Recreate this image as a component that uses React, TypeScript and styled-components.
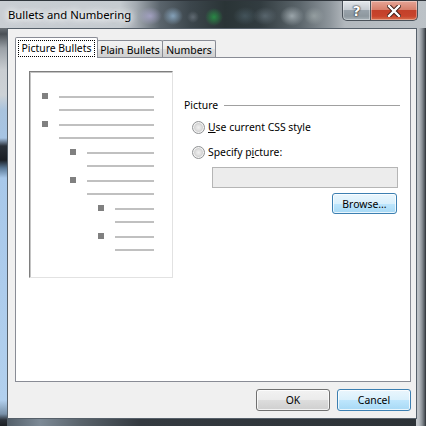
import React from 'react';
import styled, { createGlobalStyle } from 'styled-components';

const UI_FONT = `"Noto Sans", "Liberation Sans", sans-serif`;

const GlobalStyle = createGlobalStyle`
  html, body { margin: 0; padding: 0; background: #2a3036; }
  #root { width: 426px; height: 426px; overflow: hidden; }
  * { box-sizing: border-box; }
`;

const Window = styled.div`
  width: 426px;
  height: 426px;
  display: flex;
  flex-direction: column;
  font-family: ${UI_FONT};
  font-size: 10.4px;
  color: #000;
  white-space: nowrap;
  background:
    linear-gradient(to bottom,
      #5c6268 0, #6a7076 28px, #4a5056 34px, #9aa0a6 48px, #c9cdd1 70px,
      #cdd2d6 95px, #a9c3dd 110px, #a6c4e4 138px, #2a3038 146px, #1a1e24 160px,
      #5a7896 168px, #a8c8ea 178px, #b2d0ee 400px, #7890a8 414px, #2a3038 420px, #1a1e22 426px)
      0 0 / 7px 100% no-repeat,
    linear-gradient(to right, #c4c8cc 0, #b8bdc2 3px, #8c9298 6px, #4a5056 9px, #2a2e32 10px)
      right 0 / 10px 100% no-repeat,
    linear-gradient(to right, #4a5660 0, #7d8a96 40px, #5a646c 80px, #343a40 140px, #2c3236 426px)
      0 bottom / 100% 8px no-repeat,
    #b8bec4;
`;

const TitleBar = styled.div`
  height: 28px;
  flex: none;
  display: flex;
  align-items: flex-start;
  padding: 0 8px 0 8px;
  border-top: 1px solid #30363c;
  background:
    radial-gradient(ellipse 12px 9px at 150px 15px, rgba(175, 170, 210, 0.75), rgba(175, 170, 210, 0)),
    radial-gradient(ellipse 10px 9px at 173px 15px, rgba(150, 185, 215, 0.75), rgba(150, 185, 215, 0)),
    radial-gradient(ellipse 6px 6px at 193px 16px, rgba(120, 130, 140, 0.6), rgba(120, 130, 140, 0)),
    radial-gradient(ellipse 9px 9px at 214px 16px, rgba(40, 150, 70, 0.85), rgba(40, 150, 70, 0)),
    radial-gradient(ellipse 12px 9px at 245px 15px, rgba(80, 100, 110, 0.6), rgba(80, 100, 110, 0)),
    radial-gradient(ellipse 12px 9px at 265px 15px, rgba(110, 125, 135, 0.6), rgba(110, 125, 135, 0)),
    radial-gradient(ellipse 12px 10px at 292px 15px, rgba(185, 195, 200, 0.7), rgba(185, 195, 200, 0)),
    radial-gradient(ellipse 10px 9px at 314px 15px, rgba(170, 180, 180, 0.6), rgba(170, 180, 180, 0)),
    linear-gradient(to right, #c9ced3 0, #c5cbd0 120px, #a3aab1 136px, #5a646c 160px,
      #3c464c 190px, #2a3436 225px, #323c40 260px, #5c666c 300px, #8e969c 330px,
      #b2b8bd 345px, #bcc2c7 426px);
`;

const Title = styled.span`
  margin-top: 6px;
  line-height: 16px;
  font-size: 11.3px;
  color: #000;
  text-shadow: 0 0 6px #fff, 0 0 8px #fff, 0 0 10px rgba(255, 255, 255, 0.9);
`;

const Captions = styled.div`
  margin-left: auto;
  display: flex;
  height: 20px;
`;

const CaptionButton = styled.div<{ $kind: 'help' | 'close' }>`
  width: ${(p) => (p.$kind === 'close' ? '47px' : '29px')};
  height: 20px;
  display: flex;
  align-items: center;
  justify-content: center;
  border: 1px solid #4a525a;
  border-top: none;
  border-left-width: ${(p) => (p.$kind === 'close' ? '0' : '1px')};
  border-radius: ${(p) => (p.$kind === 'close' ? '0 0 5px 0' : '0 0 0 5px')};
  box-shadow: inset 0 0 0 1px rgba(255, 255, 255, 0.35);
  background: ${(p) =>
    p.$kind === 'close'
      ? 'linear-gradient(to bottom, #e6a596 0, #d7806c 45%, #c3402a 50%, #c8442c 80%, #d8704e 100%)'
      : 'linear-gradient(to bottom, #e4e8ec 0, #c6ccd2 45%, #98a2aa 50%, #8e989f 80%, #a8b2b8 100%)'};
  color: #fff;
  font-family: "DejaVu Sans", sans-serif;
  font-weight: bold;
  font-size: 14px;
  line-height: 1;
  text-shadow: 0 0 2px #202020, 0 0 1px #000;
`;

const Client = styled.div`
  flex: 1;
  margin: 0 9px 7px 7px;
  border: 1px solid #56606a;
  background: #f0f0f0;
  padding: 8px 5px 7px 7px;
  display: flex;
  flex-direction: column;
`;

const TabRow = styled.div`
  height: 20px;
  flex: none;
  display: flex;
  align-items: flex-end;
`;

const Tab = styled.div<{ $width: number; $active?: boolean }>`
  position: relative;
  z-index: ${(p) => (p.$active ? 1 : 0)};
  width: ${(p) => p.$width}px;
  height: ${(p) => (p.$active ? 21 : 17)}px;
  margin-bottom: ${(p) => (p.$active ? '-1px' : '0')};
  margin-left: -1px;
  &:first-child { margin-left: 0; }
  display: flex;
  align-items: center;
  justify-content: center;
  border: 1px solid #898c95;
  border-bottom: none;
  border-radius: 2px 2px 0 0;
  background: ${(p) =>
    p.$active
      ? '#fff'
      : 'linear-gradient(to bottom, #f2f2f2 0, #ebebeb 50%, #dddddd 51%, #cfcfcf 100%)'};
  line-height: 14px;
  padding-top: ${(p) => (p.$active ? '0' : '1px')};
`;

const FocusLabel = styled.span`
  outline: 1px dotted #000;
  outline-offset: 0;
  padding: 0 3px;
  line-height: 15px;
`;

const Panel = styled.div`
  flex: 1;
  display: flex;
  gap: 11px;
  padding: 13px 10px 0 13px;
  border: 1px solid #898c95;
  background: #fff;
`;

const Preview = styled.div`
  width: 144px;
  height: 207px;
  flex: none;
  border: 1px solid;
  border-color: #7e7e7e #e2e2e2 #e2e2e2 #7e7e7e;
  box-shadow: inset 1px 1px 0 #c4c4c4;
  padding: 21px 18px 0 12px;
  display: flex;
  flex-direction: column;
`;

const Item = styled.div<{ $level: number }>`
  height: 28px;
  margin-left: ${(p) => p.$level * 28}px;
  display: grid;
  grid-template-columns: 6px 1fr;
  column-gap: 11px;
  align-items: start;
`;

const Bullet = styled.div`
  width: 6px;
  height: 6px;
  background: #808080;
`;

const Lines = styled.div`
  padding-top: 3px;
  display: flex;
  flex-direction: column;
  gap: 11px;
`;

const Line = styled.div`
  height: 2px;
  background: #c0c0c0;
`;

const Options = styled.div`
  flex: 1;
  padding-top: 26px;
  display: flex;
  flex-direction: column;
`;

const GroupHeader = styled.div`
  height: 16px;
  display: flex;
  align-items: center;
  line-height: 16px;
`;

const GroupRule = styled.div`
  flex: 1;
  height: 1px;
  margin-left: 6px;
  margin-top: 1px;
  background: #a0a0a0;
`;

const RadioList = styled.div`
  margin-top: 6px;
  padding-left: 8px;
  display: flex;
  flex-direction: column;
  gap: 9px;
`;

const RadioRow = styled.label`
  height: 16px;
  display: flex;
  align-items: center;
  gap: 3px;
  line-height: 16px;
`;

const RadioCircle = styled.span`
  width: 13px;
  height: 13px;
  flex: none;
  border-radius: 50%;
  border: 1px solid #909294;
  background: radial-gradient(circle at 50% 50%, #f0f0f0 0, #e0e0e0 35%, #d2d2d2 50%, #e8e8e8 70%, #f6f6f6 100%);
  box-shadow: inset 0 0 0 1px rgba(255, 255, 255, 0.6);
`;

const Key = styled.span`
  text-decoration: underline;
`;

const PathField = styled.div`
  margin: 7px 2px 0 28px;
  height: 21px;
  border: 1px solid #b5b5b5;
  background: #ececec;
`;

const Button = styled.div<{ $focused?: boolean; $width: number }>`
  width: ${(p) => p.$width}px;
  height: 22px;
  display: flex;
  align-items: center;
  justify-content: center;
  border: 1px solid ${(p) => (p.$focused ? '#3c7fb1' : '#707070')};
  border-radius: 3px;
  box-shadow: inset 0 0 0 1px rgba(255, 255, 255, 0.75);
  background: ${(p) =>
    p.$focused
      ? 'linear-gradient(to bottom, #eaf6fd 0, #d9f0fc 50%, #bee6fd 51%, #a7d9f5 100%)'
      : 'linear-gradient(to bottom, #f2f2f2 0, #ebebeb 50%, #dddddd 51%, #cfcfcf 100%)'};
  line-height: 14px;
`;

const BrowseButton = styled(Button)`
  align-self: flex-end;
  margin: 5px 3px 0 0;
  height: 21px;
`;

const Footer = styled.div`
  margin-top: 7px;
  display: flex;
  justify-content: flex-end;
  gap: 7px;
`;

const CloseGlyph = () => (
  <svg width="14" height="12" viewBox="0 0 14 12">
    <path
      d="M2 1 L12 11 M12 1 L2 11"
      stroke="#3a1a14"
      strokeWidth="4.2"
      strokeLinecap="square"
      fill="none"
    />
    <path
      d="M2 1 L12 11 M12 1 L2 11"
      stroke="#fff"
      strokeWidth="2.4"
      strokeLinecap="square"
      fill="none"
    />
  </svg>
);

const previewItems = [0, 0, 1, 1, 2, 2];

export default function App() {
  return (
    <>
      <GlobalStyle />
      <Window>
        <TitleBar>
          <Title>Bullets and Numbering</Title>
          <Captions>
            <CaptionButton $kind="help">?</CaptionButton>
            <CaptionButton $kind="close">
              <CloseGlyph />
            </CaptionButton>
          </Captions>
        </TitleBar>
        <Client>
          <TabRow>
            <Tab $width={83} $active>
              <FocusLabel>Picture Bullets</FocusLabel>
            </Tab>
            <Tab $width={66}>Plain Bullets</Tab>
            <Tab $width={54}>Numbers</Tab>
          </TabRow>
          <Panel>
            <Preview>
              {previewItems.map((level, i) => (
                <Item key={i} $level={level}>
                  <Bullet />
                  <Lines>
                    <Line />
                    <Line />
                  </Lines>
                </Item>
              ))}
            </Preview>
            <Options>
              <GroupHeader>
                Picture
                <GroupRule />
              </GroupHeader>
              <RadioList>
                <RadioRow>
                  <RadioCircle />
                  <span>
                    <Key>U</Key>se current CSS style
                  </span>
                </RadioRow>
                <RadioRow>
                  <RadioCircle />
                  <span>
                    Specify p<Key>i</Key>cture:
                  </span>
                </RadioRow>
              </RadioList>
              <PathField />
              <BrowseButton $focused $width={65}>
                Browse...
              </BrowseButton>
            </Options>
          </Panel>
          <Footer>
            <Button $focused={false} $width={74}>
              OK
            </Button>
            <Button $focused $width={74}>
              Cancel
            </Button>
          </Footer>
        </Client>
      </Window>
    </>
  );
}
